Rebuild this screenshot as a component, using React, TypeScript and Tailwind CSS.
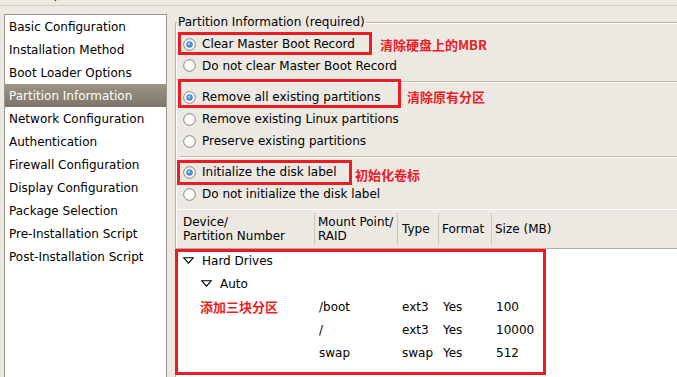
import React from 'react';

const sideItems = [
  'Basic Configuration',
  'Installation Method',
  'Boot Loader Options',
  'Partition Information',
  'Network Configuration',
  'Authentication',
  'Firewall Configuration',
  'Display Configuration',
  'Package Selection',
  'Pre-Installation Script',
  'Post-Installation Script',
];

const partitions = [
  { mount: '/boot', type: 'ext3', format: 'Yes', size: '100', note: '添加三块分区' },
  { mount: '/', type: 'ext3', format: 'Yes', size: '10000', note: '' },
  { mount: 'swap', type: 'swap', format: 'Yes', size: '512', note: '' },
];

function Radio({ checked }: { checked?: boolean }) {
  return (
    <svg width="13" height="13" viewBox="0 0 13 13" className="shrink-0">
      <circle cx="6.5" cy="6.5" r="5.8" fill="#fdfdfc" stroke="#86817a" strokeWidth="1" />
      {checked && (
        <>
          <circle cx="6.5" cy="6.5" r="3.3" fill="#4a8ad2" />
          <circle cx="6" cy="6" r="1.4" fill="#a8cbf0" />
        </>
      )}
    </svg>
  );
}

function Expander() {
  return (
    <svg width="11" height="7" viewBox="0 0 11 7" className="shrink-0">
      <path d="M0.8 0.8 H10.2 L5.5 6.2 Z" fill="none" stroke="#000" strokeWidth="1.1" strokeLinejoin="miter" />
    </svg>
  );
}

function Option({ label, checked, h }: { label: string; checked?: boolean; h: string }) {
  return (
    <div className={`${h} flex items-center gap-[6px] pl-[7px]`}>
      <Radio checked={checked} />
      <span>{label}</span>
    </div>
  );
}

function Separator() {
  return <div className="ml-[4px] h-[2px] border-t border-b border-t-[#bdb8ae] border-b-white" />;
}

const note = "absolute text-[13px] leading-[18px] font-bold text-[#ec1c24] font-['Noto_Sans_CJK_SC',sans-serif]";

export default function App() {
  return (
    <div className="relative h-[377px] w-[677px] overflow-hidden bg-[#ece9e3] font-['DejaVu_Sans','Liberation_Sans',sans-serif] text-[12px] text-black">
      {/* menu bar, scrolled almost out of view */}
      <div className="h-[6px] overflow-hidden border-b border-[#d3cdc3]">
        <div className="-mt-[13px] flex leading-[15px]">
          <span className="ml-[4px]">
            <span className="underline">F</span>ile
          </span>
          <span className="ml-[10px]">
            <span className="underline">H</span>elp
          </span>
        </div>
      </div>

      <div className="flex">
        <div className="ml-[4px] mt-[8px] h-[380px] w-[163px] shrink-0 border border-[#9c978e] bg-white">
          {sideItems.map((item, i) =>
            i === 3 ? (
              <div
                key={item}
                className="h-[23px] bg-gradient-to-b from-[#9c9486] to-[#7d7567] pl-[4px] leading-[24px] text-white"
              >
                {item}
              </div>
            ) : (
              <div key={item} className="h-[23px] pl-[4px] leading-[24px]">
                {item}
              </div>
            )
          )}
        </div>

        <div className="relative ml-[8px] mt-[16px] w-[520px] shrink-0 border-l border-t border-[#b8b3a9] pt-[10px] shadow-[inset_1px_1px_0_#fff]">
          <span className="absolute -top-[9px] left-[1px] bg-[#ece9e3] px-[1px] leading-[16px]">
            Partition Information (required)
          </span>

          <Option h="h-[22px]" checked label="Clear Master Boot Record" />
          <Option h="h-[21px]" label="Do not clear Master Boot Record" />
          <div className="mt-[5px]">
            <Separator />
          </div>
          <div className="mt-[3px]">
            <Option h="h-[22px]" checked label="Remove all existing partitions" />
            <Option h="h-[22px]" label="Remove existing Linux partitions" />
            <Option h="h-[22px]" label="Preserve existing partitions" />
          </div>
          <div className="mt-[4px]">
            <Separator />
          </div>
          <div className="mt-[3px]">
            <Option h="h-[22px]" checked label="Initialize the disk label" />
            <Option h="h-[22px]" label="Do not initialize the disk label" />
          </div>

          {/* partition table */}
          <div className="mt-[4px]">
            <div className="grid h-[40px] grid-cols-[139px_83px_41px_53px_1fr] border-t border-b border-t-white border-b-[#b2aca2] leading-[14px]">
              <div className="my-[3px] flex flex-col justify-center border-r border-[#cbc6bd] pl-[7px]">
                <span>Device/</span>
                <span>Partition Number</span>
              </div>
              <div className="my-[3px] flex flex-col justify-center border-r border-[#cbc6bd] pl-[3px]">
                <span>Mount Point/</span>
                <span>RAID</span>
              </div>
              <div className="my-[3px] flex items-center border-r border-[#cbc6bd] pl-[4px]">Type</div>
              <div className="my-[3px] flex items-center border-r border-[#cbc6bd] pl-[3px]">Format</div>
              <div className="my-[3px] flex items-center pl-[3px]">Size (MB)</div>
            </div>

            <div className="h-[200px] bg-white">
              <div className="flex h-[23px] items-center gap-[8px] pl-[7px]">
                <Expander />
                <span>Hard Drives</span>
              </div>
              <div className="flex h-[23px] items-center gap-[8px] pl-[25px]">
                <Expander />
                <span>Auto</span>
              </div>
              {partitions.map((p) => (
                <div key={p.mount} className="grid h-[23px] grid-cols-[139px_83px_41px_53px_1fr] items-center">
                  <span className="pl-[24px] text-[13px] font-bold text-[#ec1c24] font-['Noto_Sans_CJK_SC',sans-serif]">
                    {p.note}
                  </span>
                  <span className="pl-[4px]">{p.mount}</span>
                  <span className="pl-[4px]">{p.type}</span>
                  <span className="pl-[4px]">{p.format}</span>
                  <span className="pl-[4px]">{p.size}</span>
                </div>
              ))}
            </div>
          </div>
        </div>
      </div>

      {/* red annotations drawn over the dialog */}
      <div className="absolute left-[178px] top-[32px] h-[23px] w-[194px] border-[3px] border-[#ec1c24]" />
      <div className="absolute left-[178px] top-[79px] h-[29px] w-[223px] border-[3px] border-[#ec1c24]" />
      <div className="absolute left-[177px] top-[160px] h-[25px] w-[175px] border-[3px] border-[#ec1c24]" />
      <div className="absolute left-[175px] top-[249px] h-[126px] w-[371px] border-[3px] border-[#ec1c24]" />
      <span className={`${note} left-[380px] top-[36px]`}>清除硬盘上的MBR</span>
      <span className={`${note} left-[407px] top-[88px]`}>清除原有分区</span>
      <span className={`${note} left-[355px] top-[166px]`}>初始化卷标</span>
    </div>
  );
}
